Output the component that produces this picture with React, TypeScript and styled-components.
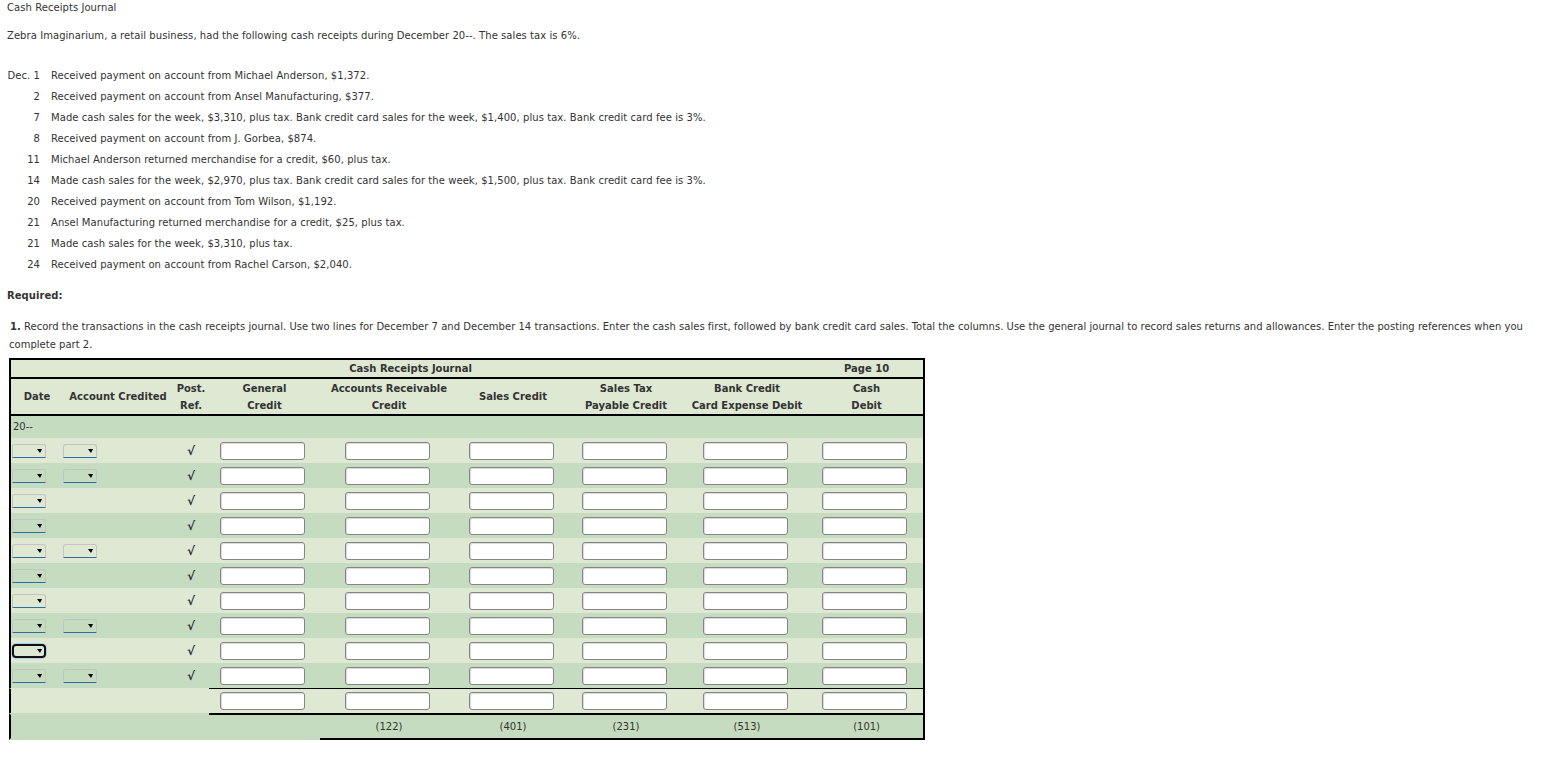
import React from "react"
import styled, { createGlobalStyle, css } from "styled-components"

const colors = {
  text: "#333333",
  light: "#dee8d3",
  dark: "#c6dcc0",
  rule: "#000000",
  selectLine: "#2e6da4",
}

const GlobalStyle = createGlobalStyle`
  body {
    margin: 0;
    background: #ffffff;
    font-family: "DejaVu Sans", Verdana, sans-serif;
    font-size: 10px;
    letter-spacing: 0.06px;
    color: ${colors.text};
  }
`

const Page = styled.div`
  padding: 1px 7px 30px 7px;
`

const Heading = styled.div`
  line-height: 14px;
`

const Intro = styled.p`
  margin: 14px 0 0;
  line-height: 14px;
`

const Transactions = styled.div`
  display: grid;
  grid-template-columns: 33px auto;
  column-gap: 11px;
  margin-top: 22px;
  line-height: 21px;
`

const TxDate = styled.div`
  text-align: right;
  white-space: nowrap;
`

const Required = styled.div`
  margin-top: 14px;
  line-height: 14px;
  font-weight: bold;
`

const Instructions = styled.p`
  margin: 15px 0 0;
  padding-left: 2px;
  line-height: 18px;
  white-space: nowrap;
  letter-spacing: 0.02px;

  b {
    margin-left: 1px;
  }
`

const Journal = styled.table`
  margin: 4px 0 0 2px;
  width: 916px;
  border-collapse: separate;
  border-spacing: 0;
  table-layout: fixed;
  letter-spacing: 0;

  td,
  th {
    padding: 0;
  }

  td:first-child,
  th:first-child {
    border-left: 2px solid ${colors.rule};
  }

  td:last-child,
  th:last-child {
    border-right: 2px solid ${colors.rule};
  }
`

const Row = styled.tr<{ $shade: "light" | "dark" }>`
  background: ${p => (p.$shade === "light" ? colors.light : colors.dark)};
`

const TitleCell = styled.th`
  height: 17px;
  border-top: 2px solid ${colors.rule};
  border-bottom: 2px solid ${colors.rule};
  font-weight: bold;
  line-height: 15px;
  text-align: center;
`

const ColHead = styled.th`
  height: 35px;
  border-bottom: 2px solid ${colors.rule};
  font-weight: bold;
  line-height: 17px;
  text-align: center;
  vertical-align: middle;
`

const YearCell = styled.td`
  height: 22px;
  padding-left: 2px !important;
  line-height: 14px;
`

const Cell = styled.td<{ $align?: "left" | "center" }>`
  height: 25px;
  text-align: ${p => p.$align ?? "center"};
  vertical-align: middle;
`

const PickCell = styled(Cell)<{ $inset: number }>`
  padding-left: ${p => p.$inset}px !important;
  line-height: 0;
`

const AmountCell = styled(Cell)`
  padding-right: 4px !important;
`

const TotalCell = styled(AmountCell)<{ $ruled?: boolean }>`
  height: 24px;
  border-top: 1px solid ${p => (p.$ruled ? colors.rule : "transparent")};
`

const FootCell = styled.td<{ $top?: boolean; $bottom?: boolean }>`
  height: 23px;
  text-align: center;
  vertical-align: middle;
  border-top: 2px solid ${p => (p.$top ? colors.rule : "transparent")};
  border-bottom: 2px solid ${p => (p.$bottom ? colors.rule : "transparent")};
  background-clip: padding-box;
`

const Amount = styled.input`
  box-sizing: border-box;
  display: block;
  margin: 0 auto;
  width: 85px;
  height: 18px;
  padding: 0 3px;
  border: 1px solid #858585;
  border-radius: 3px;
  background: #ffffff;
  box-shadow: inset 1px 1px 1px rgba(0, 0, 0, 0.15);
  font: inherit;
`

const Picker = styled.span<{ $focused?: boolean }>`
  position: relative;
  display: inline-block;
  box-sizing: border-box;
  width: 34px;
  height: 14px;
  border: 1px solid #c4c4c4;
  border-bottom: 1px solid ${colors.selectLine};
  border-radius: 3px 3px 0 0;

  &::after {
    content: "";
    position: absolute;
    right: 3px;
    top: 4px;
    border-left: 3px solid transparent;
    border-right: 2px solid transparent;
    border-top: 4px solid #000;
  }

  ${p =>
    p.$focused &&
    css`
      border: 2px solid #111;
      border-radius: 4px;
      box-shadow: 0 0 0 1px #a9d0ef;

      &::after {
        right: 2px;
        top: 3px;
      }
    `}
`

const Check = styled.span`
  font-size: 12px;
  font-weight: bold;
  color: #2a2a3a;
`

const transactions = [
  ["Dec. 1", "Received payment on account from Michael Anderson, $1,372."],
  ["2", "Received payment on account from Ansel Manufacturing, $377."],
  ["7", "Made cash sales for the week, $3,310, plus tax. Bank credit card sales for the week, $1,400, plus tax. Bank credit card fee is 3%."],
  ["8", "Received payment on account from J. Gorbea, $874."],
  ["11", "Michael Anderson returned merchandise for a credit, $60, plus tax."],
  ["14", "Made cash sales for the week, $2,970, plus tax. Bank credit card sales for the week, $1,500, plus tax. Bank credit card fee is 3%."],
  ["20", "Received payment on account from Tom Wilson, $1,192."],
  ["21", "Ansel Manufacturing returned merchandise for a credit, $25, plus tax."],
  ["21", "Made cash sales for the week, $3,310, plus tax."],
  ["24", "Received payment on account from Rachel Carson, $2,040."],
]

const columnWidths = [54, 110, 36, 111, 138, 110, 116, 126, 115]

const headers: React.ReactNode[] = [
  "Date",
  "Account Credited",
  <>Post.<br />Ref.</>,
  <>General<br />Credit</>,
  <>Accounts Receivable<br />Credit</>,
  "Sales Credit",
  <>Sales Tax<br />Payable Credit</>,
  <>Bank Credit<br />Card Expense Debit</>,
  <>Cash<br />Debit</>,
]

const entryRows = [
  { account: true },
  { account: true },
  { account: false },
  { account: false },
  { account: true },
  { account: false },
  { account: false },
  { account: true },
  { account: false, focused: true },
  { account: true },
]

const amountColumns = [0, 1, 2, 3, 4, 5]
const postingRefs = ["", "", "", "", "(122)", "(401)", "(231)", "(513)", "(101)"]

export default function App() {
  return (
    <Page>
      <GlobalStyle />
      <Heading>Cash Receipts Journal</Heading>
      <Intro>Zebra Imaginarium, a retail business, had the following cash receipts during December 20--. The sales tax is 6%.</Intro>

      <Transactions>
        {transactions.map(([date, text], i) => (
          <React.Fragment key={i}>
            <TxDate>{date}</TxDate>
            <div>{text}</div>
          </React.Fragment>
        ))}
      </Transactions>

      <Required>Required:</Required>
      <Instructions>
        <b>1.</b> Record the transactions in the cash receipts journal. Use two lines for December 7 and December 14
        transactions. Enter the cash sales first, followed by bank credit card sales. Total the columns. Use the general
        journal to record sales returns and allowances. Enter the posting references when you
        <br />
        complete part 2.
      </Instructions>

      <Journal>
        <colgroup>
          {columnWidths.map((w, i) => (
            <col key={i} style={{ width: w }} />
          ))}
        </colgroup>
        <thead>
          <Row $shade="light">
            <TitleCell colSpan={8}>Cash Receipts Journal</TitleCell>
            <TitleCell>Page 10</TitleCell>
          </Row>
          <Row $shade="light">
            {headers.map((h, i) => (
              <ColHead key={i}>{h}</ColHead>
            ))}
          </Row>
        </thead>
        <tbody>
          <Row $shade="dark">
            <YearCell colSpan={9}>20--</YearCell>
          </Row>
          {entryRows.map((row, i) => (
            <Row key={i} $shade={i % 2 === 0 ? "light" : "dark"}>
              <PickCell $align="left" $inset={1}>
                <Picker $focused={row.focused} />
              </PickCell>
              <PickCell $align="left" $inset={0}>
                {row.account && <Picker />}
              </PickCell>
              <Cell>
                <Check>√</Check>
              </Cell>
              {amountColumns.map(c => (
                <AmountCell key={c}>
                  <Amount type="text" aria-label={`amount ${i + 1}-${c + 1}`} />
                </AmountCell>
              ))}
            </Row>
          ))}
          <Row $shade="light">
            <TotalCell />
            <TotalCell />
            <TotalCell />
            {amountColumns.map(c => (
              <TotalCell key={c} $ruled>
                <Amount type="text" aria-label={`total ${c + 1}`} />
              </TotalCell>
            ))}
          </Row>
          <Row $shade="dark">
            {postingRefs.map((ref, i) => (
              <FootCell key={i} $top={i >= 3} $bottom={i >= 4}>
                {ref}
              </FootCell>
            ))}
          </Row>
        </tbody>
      </Journal>
    </Page>
  )
}
